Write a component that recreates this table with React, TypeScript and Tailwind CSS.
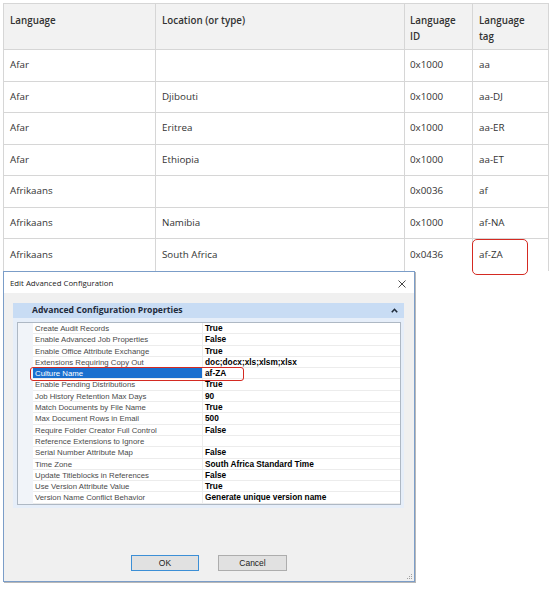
import React from "react";

const rows: [string, string, string, string][] = [
  ["Afar", "", "0x1000", "aa"],
  ["Afar", "Djibouti", "0x1000", "aa-DJ"],
  ["Afar", "Eritrea", "0x1000", "aa-ER"],
  ["Afar", "Ethiopia", "0x1000", "aa-ET"],
  ["Afrikaans", "", "0x0036", "af"],
  ["Afrikaans", "Namibia", "0x1000", "af-NA"],
  ["Afrikaans", "South Africa", "0x0436", "af-ZA"],
];

const rowHeights = ["h-[32px]", "h-[31px]", "h-[32px]", "h-[31px]", "h-[32px]", "h-[31px]", "h-[32px]"];

const props: [string, string][] = [
  ["Create Audit Records", "True"],
  ["Enable Advanced Job Properties", "False"],
  ["Enable Office Attribute Exchange", "True"],
  ["Extensions Requiring Copy Out", "doc;docx;xls;xlsm;xlsx"],
  ["Culture Name", "af-ZA"],
  ["Enable Pending Distributions", "True"],
  ["Job History Retention Max Days", "90"],
  ["Match Documents by File Name", "True"],
  ["Max Document Rows in Email", "500"],
  ["Require Folder Creator Full Control", "False"],
  ["Reference Extensions to Ignore", ""],
  ["Serial Number Attribute Map", "False"],
  ["Time Zone", "South Africa Standard Time"],
  ["Update Titleblocks in References", "False"],
  ["Use Version Attribute Value", "True"],
  ["Version Name Conflict Behavior", "Generate unique version name"],
];

const segoe = { fontFamily: '"Open Sans", "Noto Sans", sans-serif' };
const sans = { fontFamily: '"Liberation Sans", Arial, sans-serif' };

export default function App() {
  return (
    <div className="w-[558px] h-[590px] bg-white overflow-hidden relative" style={segoe}>
      {/* Table */}
      <div className="ml-[3px] pt-[3px]">
        <div className="w-[546px] border-l border-t border-[#d6d6d6] text-[#333] text-[9.8px]">
          <div className="grid grid-cols-[152px_249px_68px_76px] h-[46px] bg-[#f2f2f2] font-semibold leading-[16px]">
            <div className="border-r border-b border-[#d6d6d6] pl-[6px] pt-[9px]">Language</div>
            <div className="border-r border-b border-[#d6d6d6] pl-[6px] pt-[9px]">Location (or type)</div>
            <div className="border-r border-b border-[#d6d6d6] pl-[5px] pt-[9px]">Language<br />ID</div>
            <div className="border-r border-b border-[#d6d6d6] pl-[6px] pt-[9px]">Language<br />tag</div>
          </div>
          {rows.map((r, i) => {
            const last = i === rows.length - 1;
            const b = last ? "border-r border-[#d6d6d6]" : "border-r border-b border-[#d6d6d6]";
            return (
              <div key={i} className={`grid grid-cols-[152px_249px_68px_76px] ${rowHeights[i]}`}>
                <div className={`${b} pl-[6px] flex items-center`}>{r[0]}</div>
                <div className={`${b} pl-[6px] flex items-center`}>{r[1]}</div>
                <div className={`${b} pl-[5px] flex items-center`}>{r[2]}</div>
                <div className={`${b} pl-[6px] flex items-center`}>{r[3]}</div>
              </div>
            );
          })}
        </div>
      </div>

      {/* Red highlight around af-ZA */}
      <div className="absolute left-[472px] top-[239px] w-[56px] h-[36px] rounded-[5px] border-[1.5px] border-[#d42a22]" />

      {/* Dialog */}
      <div className="ml-[3px] w-[412px] h-[311px] border border-[#7b9dc8] shadow-[1px_1px_0_#b8b8b8] flex flex-col relative">
        <div className="h-[21px] bg-white flex items-center justify-between pl-[6px] pr-[8px]">
          <span className="text-[7.8px] text-[#222] pt-[3px]">Edit Advanced Configuration</span>
          <svg width="8" height="8" viewBox="0 0 8 8" className="mt-[3px]">
            <path d="M0.5 0.5 L7.5 7.5 M7.5 0.5 L0.5 7.5" stroke="#333" strokeWidth="0.9" />
          </svg>
        </div>
        <div className="flex-1 bg-[#f0f0f0] flex flex-col">
          {/* Group panel */}
          <div className="mt-[10px] ml-[9px] w-[391px] bg-[#e6eef9] rounded-t-[2px] pb-[3px]">
            <div className="h-[15px] bg-[#c8dcf4] flex items-center justify-between pl-[19px] pr-[6px]">
              <span className="text-[8.6px] font-bold text-[#1e2a3a]">Advanced Configuration Properties</span>
              <svg width="7" height="5" viewBox="0 0 7 5">
                <path d="M0.8 4.2 L3.5 1.3 L6.2 4.2" stroke="#1e2a3a" strokeWidth="1.6" fill="none" />
              </svg>
            </div>
            <div className="ml-[4px] mr-[3px] mt-[4px] bg-white border border-[#aeb8c4] relative" style={sans}>
              {props.map(([k, v], i) => {
                const sel = k === "Culture Name";
                return (
                  <div key={i} className="grid grid-cols-[15px_170px_1fr] h-[11.3px] leading-[11px]">
                    <div className="bg-[#f1f4f9]" />
                    <div
                      className={`border-b border-r border-[#ececec] pl-[2px] text-[7.8px] whitespace-nowrap overflow-hidden ${
                        sel ? "bg-[#1a6fcf] text-white" : "text-[#4a4a4a]"
                      }`}
                    >
                      {k}
                    </div>
                    <div className="border-b border-[#ececec] pl-[2px] text-[8.3px] font-bold text-black whitespace-nowrap overflow-hidden">
                      {v}
                    </div>
                  </div>
                );
              })}
              {/* Red highlight around Culture Name */}
              <div className="absolute left-[12px] top-[44px] w-[214px] h-[14px] rounded-[3px] border-[1.5px] border-[#d42a22]" />
            </div>
          </div>
          <div className="flex-1" />
          <div className="flex justify-center gap-[19px] pb-[10px]" style={sans}>
            <div className="w-[68px] h-[16px] bg-[#e1e1e1] border border-[#3c8fd6] flex items-center justify-center text-[8.5px] text-[#222]">
              OK
            </div>
            <div className="w-[69px] h-[16px] bg-[#e1e1e1] border border-[#adadad] flex items-center justify-center text-[8.5px] text-[#222]">
              Cancel
            </div>
          </div>
        </div>
        {/* resize grip */}
        <svg className="absolute right-[1px] bottom-[1px]" width="7" height="7" viewBox="0 0 7 7">
          <rect x="5" y="1" width="1" height="1" fill="#a0a0a0" />
          <rect x="3" y="3" width="1" height="1" fill="#a0a0a0" />
          <rect x="5" y="3" width="1" height="1" fill="#a0a0a0" />
          <rect x="1" y="5" width="1" height="1" fill="#a0a0a0" />
          <rect x="3" y="5" width="1" height="1" fill="#a0a0a0" />
          <rect x="5" y="5" width="1" height="1" fill="#a0a0a0" />
        </svg>
      </div>
    </div>
  );
}
